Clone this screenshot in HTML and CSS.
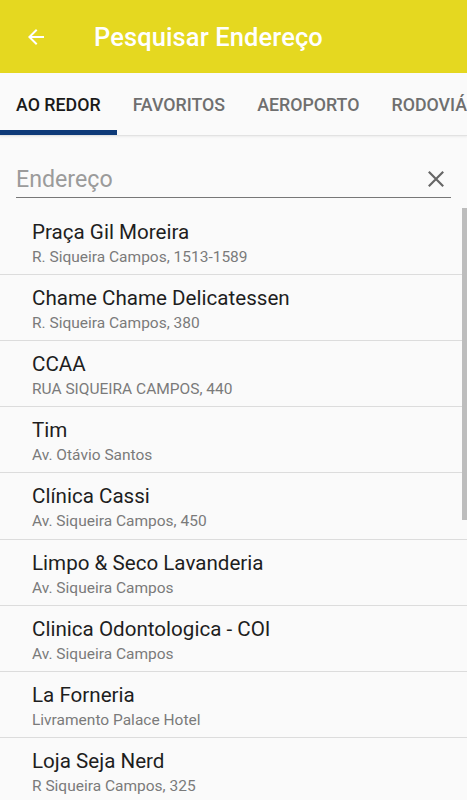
FILE: index.html
```html
<!DOCTYPE html>
<html lang="pt">
<head>
<meta charset="utf-8">
<link rel="stylesheet" href="styles.css">
</head>
<body>
<div class="app">
  <header class="appbar">
    <svg class="back" width="24" height="24" viewBox="0 0 24 24"><path d="M20 11H7.83l5.59-5.59L12 4l-8 8 8 8 1.41-1.41L7.83 13H20v-2z" fill="#fff"/></svg>
    <h1 class="title">Pesquisar Endereço</h1>
  </header>
  <nav class="tabs">
    <div class="tab active">AO REDOR</div>
    <div class="tab">FAVORITOS</div>
    <div class="tab">AEROPORTO</div>
    <div class="tab">RODOVIÁRIA</div>
  </nav>
  <div class="search">
    <span class="placeholder">Endereço</span>
    <svg class="clear" width="20" height="20" viewBox="0 0 20 20"><path d="M2 2L18 18M18 2L2 18" stroke="#666" stroke-width="2.4"/></svg>
  </div>
  <div class="listwrap">
    <ul class="list">
      <li class="row"><div class="name">Praça Gil Moreira</div><div class="addr">R. Siqueira Campos, 1513-1589</div></li>
      <li class="row"><div class="name">Chame Chame Delicatessen</div><div class="addr">R. Siqueira Campos, 380</div></li>
      <li class="row"><div class="name">CCAA</div><div class="addr">RUA SIQUEIRA CAMPOS, 440</div></li>
      <li class="row"><div class="name">Tim</div><div class="addr">Av. Otávio Santos</div></li>
      <li class="row"><div class="name">Clínica Cassi</div><div class="addr">Av. Siqueira Campos, 450</div></li>
      <li class="row"><div class="name">Limpo &amp; Seco Lavanderia</div><div class="addr">Av. Siqueira Campos</div></li>
      <li class="row"><div class="name">Clinica Odontologica - COI</div><div class="addr">Av. Siqueira Campos</div></li>
      <li class="row"><div class="name">La Forneria</div><div class="addr">Livramento Palace Hotel</div></li>
      <li class="row"><div class="name">Loja Seja Nerd</div><div class="addr">R Siqueira Campos, 325</div></li>
    </ul>
    <div class="scrollbar"></div>
  </div>
</div>
</body>
</html>
```
FILE: styles.css
```css
* { box-sizing: border-box; }
html, body { margin: 0; padding: 0; }
body {
  width: 467px;
  height: 800px;
  overflow: hidden;
  background: #fafafa;
  font-family: Roboto, "Liberation Sans", sans-serif;
}
.app { display: flex; flex-direction: column; height: 800px; }
.appbar {
  height: 73px;
  background: #e5d820;
  display: flex;
  align-items: center;
  padding-left: 24px;
  flex-shrink: 0;
}
.back { width: 24px; height: 24px; margin-right: 46px; }
.title {
  margin: 0;
  color: #fff;
  font-size: 25.5px;
  font-weight: 500;
  letter-spacing: 0.1px;
}
.tabs {
  height: 63px;
  display: flex;
  overflow: hidden;
  white-space: nowrap;
  background: #fafafa;
  border-bottom: 1px solid #e2e2e2;
  box-shadow: 0 1px 2px rgba(0,0,0,0.06);
  flex-shrink: 0;
}
.tab {
  display: flex;
  align-items: center;
  height: 62px;
  padding: 5px 16px 0 16px;
  font-size: 17.8px;
  font-weight: 500;
  color: #6f6f6f;
  border-bottom: 5px solid transparent;
  flex-shrink: 0;
}
.tab.active { color: #1a1a1a; border-bottom-color: #0e3a78; }
.search {
  margin: 24px 16px 0 16px;
  height: 38px;
  border-bottom: 1px solid #777;
  display: flex;
  align-items: center;
  justify-content: space-between;
  flex-shrink: 0;
}
.placeholder { font-size: 23.2px; color: #9b9b9b; }
.clear { margin-right: 6px; width: 18px; height: 18px; }
.listwrap { position: relative; margin-top: 10px; flex: 1; }
.list { list-style: none; margin: 0; padding: 0; }
.row {
  height: 66.14px;
  padding: 11px 32px 0 32px;
  border-bottom: 1px solid #dcdcdc;
}
.row:first-child { height: 67px; padding-top: 12px; }
.name { font-size: 20.6px; color: #1e1e1e; line-height: 24px; }
.addr { font-size: 15.5px; color: #7a7a7a; line-height: 22px; margin-top: 2px; }
.scrollbar {
  position: absolute;
  right: 0;
  top: 0;
  width: 5px;
  height: 312px;
  background: #bdbdbd;
}
```
